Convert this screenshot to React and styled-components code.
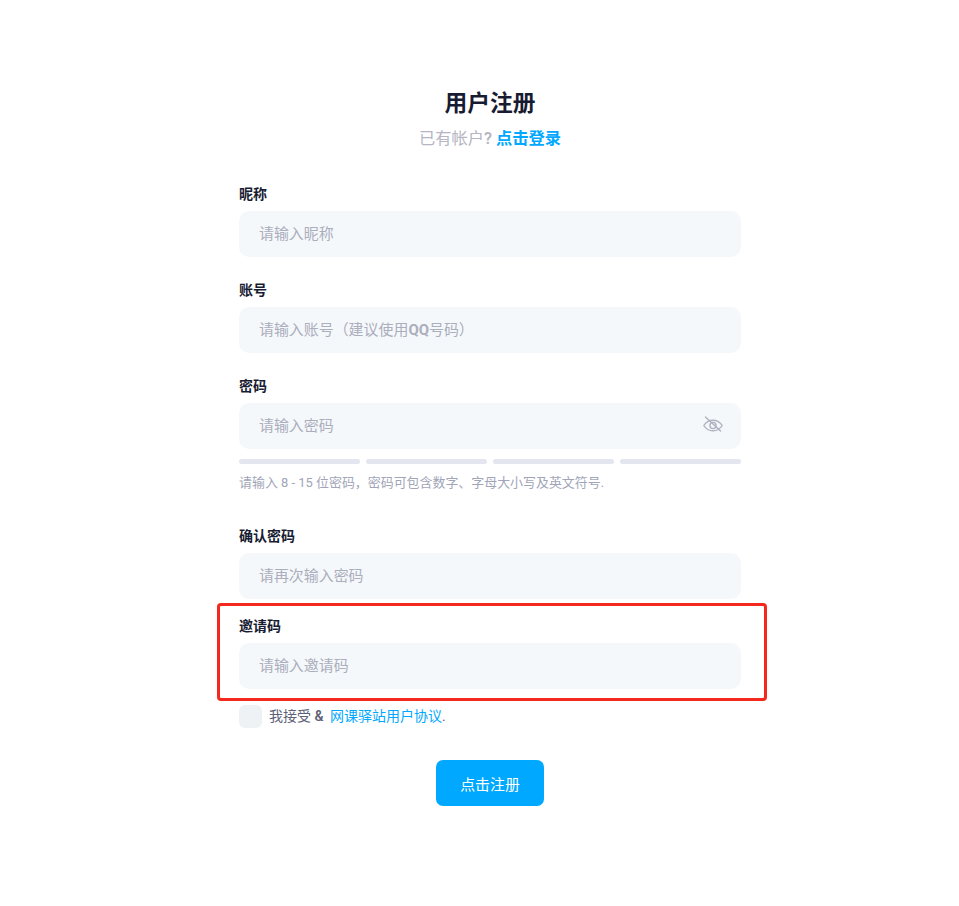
import styled, { createGlobalStyle } from "styled-components";
import { useState } from "react";

const GlobalStyle = createGlobalStyle`
  html, body {
    margin: 0;
    padding: 0;
    background: #fff;
    font-family: Roboto, "Noto Sans CJK SC", sans-serif;
  }
  * {
    box-sizing: border-box;
  }
`;

function EyeOffIcon() {
  return (
    <svg width="20" height="20" viewBox="0 0 20 20" fill="none" stroke="#b0b2c0" strokeWidth="1.4" strokeLinecap="round">
      <path d="M.8 9.500C3 6 6.200 4.200 10 4.200s7 1.800 9.200 5.300c-2.200 3.500-5.400 5.300-9.200 5.300S3 13 .8 9.500z" />
      <circle cx="10" cy="9.500" r="3.100" />
      <path d="M2.500 1l15 14" />
    </svg>
  );
}

export default function App() {
  const [agreed, setAgreed] = useState(false);
  return (
    <>
      <GlobalStyle />
      <Page>
        <Form>
          <Header>
            <Title>用户注册</Title>
            <Sub>
              已有帐户<Mark>?</Mark> <SubLink href="#">点击登录</SubLink>
            </Sub>
          </Header>

          <Group>
            <Label>昵称</Label>
            <Input placeholder="请输入昵称" />
          </Group>

          <Group>
            <Label>账号</Label>
            <InputWrap>
              <Input placeholder=" " />
              <Ghost>
                请输入账号（建议使用<b>QQ</b>号码）
              </Ghost>
            </InputWrap>
          </Group>

          <Group $gap={33}>
            <Label>密码</Label>
            <InputWrap>
              <Input type="password" placeholder="请输入密码" />
              <EyeBtn type="button" aria-label="显示密码">
                <EyeOffIcon />
              </EyeBtn>
            </InputWrap>
            <Meter>
              <MeterBar />
              <MeterBar />
              <MeterBar />
              <MeterBar />
            </Meter>
            <Hint>请输入 8 - 15 位密码，密码可包含数字、字母大小写及英文符号.</Hint>
          </Group>

          <Group $gap={17}>
            <Label>确认密码</Label>
            <Input type="password" placeholder="请再次输入密码" />
          </Group>

          <Highlighted>
            <Label>邀请码</Label>
            <Input placeholder="请输入邀请码" />
            <RedFrame />
          </Highlighted>

          <Agree>
            <CheckBox type="checkbox" checked={agreed} onChange={(e) => setAgreed(e.target.checked)} />
            <AgreeText>
              我接受 <Mark>&amp;</Mark> <AgreeLink href="#">网课驿站用户协议</AgreeLink>.
            </AgreeText>
          </Agree>

          <Actions>
            <Submit type="button">点击注册</Submit>
          </Actions>
        </Form>
      </Page>
    </>
  );
}

const Page = styled.div`
  min-height: 906px;
  padding: 89px 0 0 239px;
`;

const Form = styled.form`
  width: 502px;
`;

const Header = styled.div`
  text-align: center;
  margin-bottom: 33px;
`;

const Title = styled.h1`
  margin: 0 0 8px;
  font-size: 22.75px;
  line-height: 30px;
  font-weight: 700;
  color: #181c32;
`;

const Sub = styled.div`
  font-size: 16.25px;
  line-height: 24px;
  font-weight: 400;
  color: #b5b5c3;
`;

const Mark = styled.span`
  font-weight: 600;
`;

const SubLink = styled.a`
  color: #00a8ff;
  font-weight: 700;
  text-decoration: none;
`;

const Group = styled.div`
  margin-bottom: ${(p) => p.$gap ?? 23}px;
`;

const Label = styled.label`
  display: block;
  margin-bottom: 6px;
  font-size: 14px;
  line-height: 21px;
  font-weight: 700;
  color: #181c32;
`;

const Input = styled.input`
  display: block;
  width: 100%;
  height: 46px;
  padding: 0 20px;
  border: 0;
  border-radius: 10px;
  outline: none;
  background: #f5f8fa;
  font-family: inherit;
  font-size: 14.95px;
  font-weight: 400;
  color: #5e6278;
  &::placeholder {
    color: #abaebd;
    opacity: 1;
  }
`;

const InputWrap = styled.div`
  position: relative;
`;

const Ghost = styled.span`
  position: absolute;
  left: 20px;
  top: 0;
  font-size: 14.95px;
  line-height: 46px;
  color: #abaebd;
  pointer-events: none;
  b {
    font-weight: 700;
  }
  input:not(:placeholder-shown) + & {
    display: none;
  }
`;

const EyeBtn = styled.button`
  position: absolute;
  top: 13px;
  right: 18px;
  display: flex;
  padding: 0;
  border: 0;
  background: none;
  cursor: pointer;
`;

const Meter = styled.div`
  display: grid;
  grid-template-columns: repeat(4, 1fr);
  gap: 6px;
  margin-top: 10px;
`;

const MeterBar = styled.div`
  height: 5px;
  border-radius: 3px;
  background: #e4e6ef;
`;

const Hint = styled.div`
  margin-top: 9px;
  font-size: 12.95px;
  line-height: 20px;
  color: #a1a5b7;
`;

const Highlighted = styled.div`
  position: relative;
  margin-bottom: 16px;
`;

const RedFrame = styled.div`
  position: absolute;
  left: -22px;
  right: -26px;
  top: -13px;
  bottom: -12px;
  border: 3px solid #f5281e;
  border-radius: 4px;
  pointer-events: none;
`;

const Agree = styled.label`
  display: flex;
  align-items: center;
  gap: 7px;
  margin-bottom: 32px;
`;

const CheckBox = styled.input`
  appearance: none;
  width: 23px;
  height: 23px;
  margin: 0;
  border-radius: 6px;
  background: #eff2f5;
  cursor: pointer;
  &:checked {
    background: #00a8ff;
  }
`;

const AgreeText = styled.span`
  font-size: 14px;
  line-height: 21px;
  font-weight: 400;
  color: #5e6278;
`;

const AgreeLink = styled.a`
  margin-left: 3px;
  color: #00a8ff;
  text-decoration: none;
`;

const Actions = styled.div`
  display: flex;
  justify-content: center;
`;

const Submit = styled.button`
  width: 108px;
  height: 46px;
  border: 0;
  border-radius: 7px;
  background: #00a8ff;
  font-family: inherit;
  font-size: 14.95px;
  color: #fff;
  cursor: pointer;
`;
